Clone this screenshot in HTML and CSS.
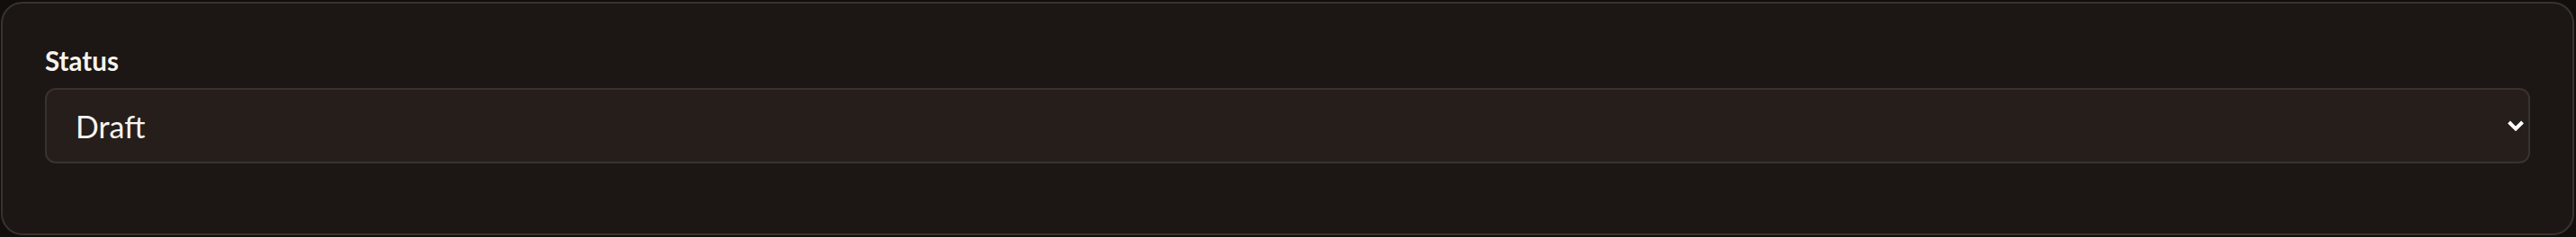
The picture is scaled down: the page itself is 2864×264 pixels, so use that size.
FILE: index.html
```html
<!DOCTYPE html>
<html lang="en">
<head>
    <meta charset="UTF-8">
    <meta name="viewport" content="width=device-width, initial-scale=1.0">
    <title>Status</title>
    <link rel="stylesheet" href="styles.css">
</head>
<body>
    <div class="card">
        <label class="field-label" for="status">Status</label>
        <div class="select-wrap">
            <select id="status" class="select">
                <option selected>Draft</option>
                <option>Published</option>
                <option>Archived</option>
            </select>
            <svg class="chevron" width="20" height="14" viewBox="0 0 20 14" aria-hidden="true">
                <polyline points="2.5,3 10,10.5 17.5,3" fill="none" stroke="#ffffff" stroke-width="4" stroke-linecap="butt" stroke-linejoin="miter"/>
            </svg>
        </div>
    </div>
</body>
</html>
```

FILE: styles.css
```css
html, body {
    margin: 0;
    padding: 0;
    background-color: #120e0c;
    height: 264px;
}
body {
    padding: 2px 2px 2px 1px;
    box-sizing: border-box;
    font-family: "Lato", "Noto Sans", sans-serif;
    color: #f7f3ee;
}
.card {
    box-sizing: border-box;
    height: 260px;
    background-color: #1c1714;
    border: 2px solid #3a322e;
    border-radius: 24px;
    padding: 44px 47px 0 47px;
}
.field-label {
    display: block;
    font-size: 29.5px;
    line-height: 40px;
    font-weight: 700;
    margin-bottom: 10px;
}
.select-wrap {
    position: relative;
}
.select {
    appearance: none;
    -webkit-appearance: none;
    display: block;
    box-sizing: border-box;
    width: 100%;
    height: 84px;
    margin: 0;
    padding: 0 64px 0 32px;
    background-color: #261e1b;
    border: 2px solid #3a3230;
    border-radius: 12px;
    color: #f7f3ee;
    font-family: "Lato", "Noto Sans", sans-serif;
    font-size: 34px;
    outline: none;
}
.chevron {
    position: absolute;
    right: 6px;
    top: 35px;
    pointer-events: none;
}
```
